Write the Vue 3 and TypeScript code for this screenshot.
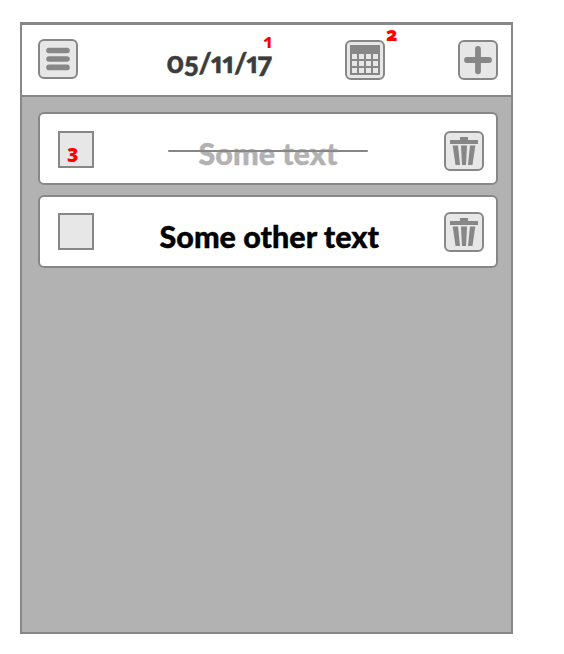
<script setup lang="ts">
import { ref } from 'vue'

interface Task {
  id: number
  text: string
  start: number
  width: number
  done: boolean
  note?: string
}

const date = '05/11/17'
const tasks = ref<Task[]>([
  { id: 1, text: 'Some text', start: 104.5, width: 139, done: true, note: '3' },
  { id: 2, text: 'Some other text', start: 65.5, width: 219.5, done: false },
])
</script>

<template>
  <main class="frame">
    <header class="bar">
      <button class="btn menu" aria-label="Menu">
        <svg width="40" height="40" viewBox="0 0 40 40">
          <path d="M11 11.5H29M11 20H29M11 28.4H29" stroke="#878787" stroke-width="5.6" stroke-linecap="round" />
        </svg>
      </button>
      <div class="date">
        <svg width="112" height="40" viewBox="0 0 112 40">
          <text class="digits" x="0.3" y="32.8" textLength="105.5" lengthAdjust="spacingAndGlyphs">{{ date }}</text>
        </svg>
        <span class="note note-date">1</span>
      </div>
      <div class="calendar">
        <button class="btn" aria-label="Calendar">
          <svg width="40" height="40" viewBox="0 0 40 40">
            <rect x="5" y="5" width="30" height="30" fill="#878787" />
            <g fill="#e7e7e7">
              <template v-for="r in 3" :key="r">
                <rect v-for="c in 4" :key="c" :x="c * 7" :y="7 + r * 7" width="5" height="5" />
              </template>
            </g>
          </svg>
        </button>
        <span class="note note-cal">2</span>
      </div>
      <button class="btn add" aria-label="Add">
        <svg width="40" height="40" viewBox="0 0 40 40">
          <path d="M20 9V31.3M9 20H31" stroke="#878787" stroke-width="5.8" stroke-linecap="round" />
        </svg>
      </button>
    </header>
    <ul class="list">
      <li v-for="task in tasks" :key="task.id" class="card" :class="{ done: task.done }">
        <span class="check" @click="task.done = !task.done">
          <span v-if="task.note" class="note note-check">{{ task.note }}</span>
        </span>
        <svg class="label" width="350" height="69" viewBox="0 0 350 69">
          <text class="title" :x="task.start" y="51" :textLength="task.width" lengthAdjust="spacingAndGlyphs">{{ task.text }}</text>
          <path v-if="task.done" d="M75 37H273" stroke="#878787" stroke-width="2" stroke-linecap="round" />
        </svg>
        <button class="btn trash" aria-label="Delete">
          <svg width="40" height="40" viewBox="0 0 40 40" fill="#878787">
            <path d="M6 9H16V6H24V9H34V13H6ZM8.7 14.5H14L16 34H11.5ZM17 14.5H23L22 34H18ZM26 14.5H31.3L28.5 34H24Z" />
          </svg>
        </button>
      </li>
    </ul>
  </main>
</template>

<style>
body {
  background: #fff;
}
</style>

<style scoped>
.frame {
  box-sizing: border-box;
  width: 493px;
  height: 612px;
  margin: 22px 0 0 20px;
  border: 2px solid #878787;
  border-top-width: 3px;
  background: #b2b2b2;
  font-family: "Open Sans", "Noto Sans", sans-serif;
}
.bar {
  display: flex;
  align-items: flex-start;
  box-sizing: border-box;
  height: 72px;
  padding: 15px 13px 0 16px;
  border-bottom: 2px solid #878787;
  background: #fff;
}
.btn {
  display: block;
  flex: none;
  box-sizing: border-box;
  width: 40px;
  height: 40px;
  padding: 0;
  border: 2px solid #878787;
  border-radius: 6px;
  background: #e7e7e7;
}
.btn svg {
  display: block;
  margin: -2px;
}
.menu {
  margin-top: -1px;
}
.date {
  position: relative;
  width: 112px;
  height: 40px;
  margin-left: 88px;
}
.date svg {
  display: block;
}
.digits {
  fill: #3c3c3b;
  stroke: #3c3c3b;
  stroke-width: 0.5px;
  font-family: Lato, "Open Sans", sans-serif;
  font-size: 29px;
  font-weight: 900;
  font-feature-settings: "onum", "pnum";
}
.calendar {
  position: relative;
  margin-left: 67px;
}
.add {
  margin-left: 73px;
}
.note {
  position: absolute;
  color: #f00;
  font-size: 19px;
  font-weight: 700;
  line-height: 20px;
  font-feature-settings: "onum";
}
.note-date {
  left: 97px;
  top: -9px;
}
.note-cal {
  left: 41px;
  top: -16px;
  font-weight: 800;
}
.note-check {
  left: 7px;
  top: 9px;
  font-weight: 800;
}
.list {
  display: flex;
  flex-direction: column;
  gap: 10px;
  margin: 0;
  padding: 15px 13px 0 16px;
  list-style: none;
}
.card {
  display: flex;
  align-items: flex-start;
  box-sizing: border-box;
  height: 73px;
  padding-left: 18px;
  border: 2px solid #878787;
  border-radius: 6px;
  background: #fff;
}
.check {
  position: relative;
  flex: none;
  box-sizing: border-box;
  width: 36px;
  height: 37px;
  margin-top: 16px;
  border: 2px solid #878787;
  background: #e7e7e7;
}
.done .check {
  margin-top: 17px;
}
.label {
  display: block;
  flex: none;
}
.trash {
  margin-top: 15px;
}
.done .trash {
  margin-top: 17px;
}
.title {
  fill: #000;
  stroke: #000;
  stroke-width: 0.4px;
  font-family: Lato, "Open Sans", sans-serif;
  font-size: 31px;
  font-weight: 900;
}
.done .title {
  fill: #b2b2b2;
  stroke: #b2b2b2;
}
</style>
